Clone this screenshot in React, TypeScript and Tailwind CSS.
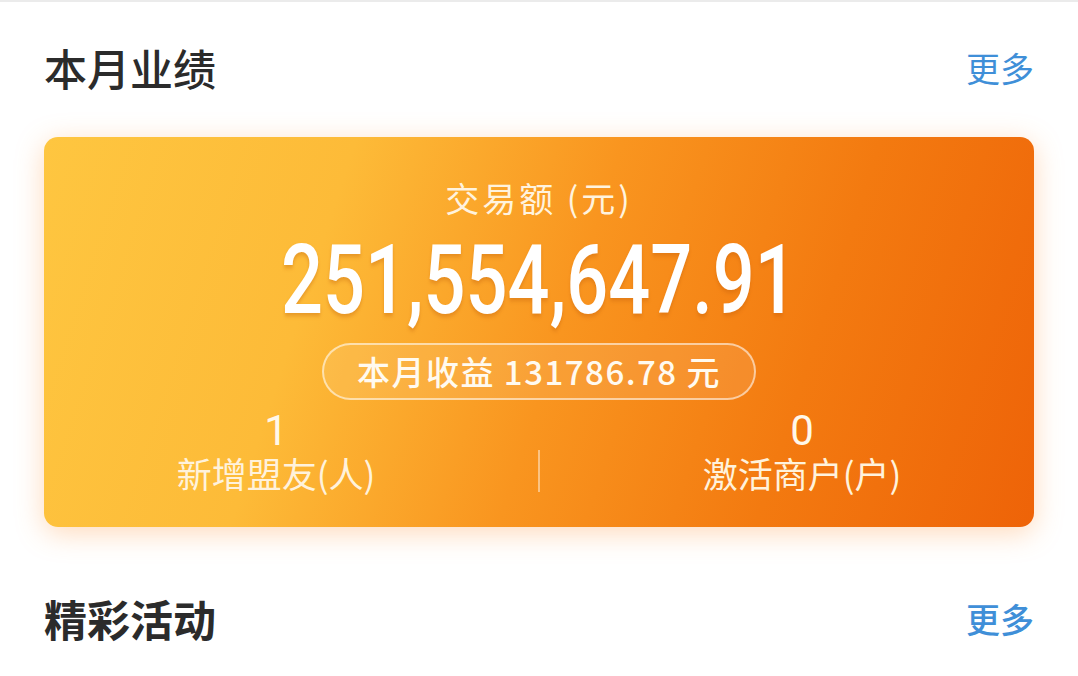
const cjk = "font-['Noto_Sans_CJK_SC','Noto_Sans',sans-serif]";
const num = "font-['Roboto','Noto_Sans_CJK_SC',sans-serif]";

function SectionHeader({ title, bold }: { title: string; bold?: boolean }) {
  return (
    <div className="flex items-center justify-between">
      <h2 className={`${cjk} text-[43px] leading-none text-[#2b2b2b] ${bold ? "font-bold" : "font-medium"}`}>
        {title}
      </h2>
      <a className={`${cjk} text-[34px] leading-none text-[#3f8fd8] ${bold ? "font-medium" : "font-normal"}`}>更多</a>
    </div>
  );
}

function Stat({ value, label }: { value: string; label: string }) {
  return (
    <div className="w-[300px] flex flex-col items-center">
      <div className={`${num} text-[42px] leading-none text-[#fff8ea]`}>{value}</div>
      <div className={`${cjk} mt-[3px] text-[35px] leading-none text-[#fff2dc]`}>{label}</div>
    </div>
  );
}

export default function App() {
  return (
    <main className="w-[1078px] h-[676px] bg-white border-t-2 border-[#ebebeb] overflow-hidden">
      <div className="px-[44px]">
        <div className="pt-[44px]">
          <SectionHeader title="本月业绩" />
        </div>

        {/* Performance card */}
        <section className="mt-[48px] h-[390px] rounded-[14px] bg-[linear-gradient(108deg,#fec640_0%,#fdbb38_28%,#f9951f_52%,#f37a10_75%,#ee6308_100%)] shadow-[0_6px_28px_rgba(255,150,60,0.35)] flex flex-col items-center pt-[44px]">
          <div className={`${cjk} text-[34px] leading-none tracking-[3px] text-[#fff3de]`}>交易额 (元)</div>
          <div className="mt-[17px] h-[96px] flex justify-center">
            <span className={`${num} inline-block text-[96px] leading-none font-medium text-white scale-x-[0.77] drop-shadow-[0_3px_2px_rgba(190,90,10,0.35)] whitespace-nowrap`}>
              251,554,647.91
            </span>
          </div>
          <div className="mt-[15px] h-[57px] w-[434px] rounded-full border-2 border-white/55 bg-white/10 flex items-center justify-center">
            <span className={`${cjk} text-[33px] leading-none font-medium tracking-[1.5px] text-[#fffaf0]`}>本月收益 131786.78 元</span>
          </div>
          <div className="mt-[10px] w-full px-[82px] flex items-start justify-between">
            <Stat value="1" label="新增盟友(人)" />
            <div className="w-[2px] h-[42px] mt-[40px] bg-white/45" />
            <Stat value="0" label="激活商户(户)" />
          </div>
        </section>

        <div className="pt-[70px]">
          <SectionHeader title="精彩活动" bold />
        </div>
      </div>
    </main>
  );
}
